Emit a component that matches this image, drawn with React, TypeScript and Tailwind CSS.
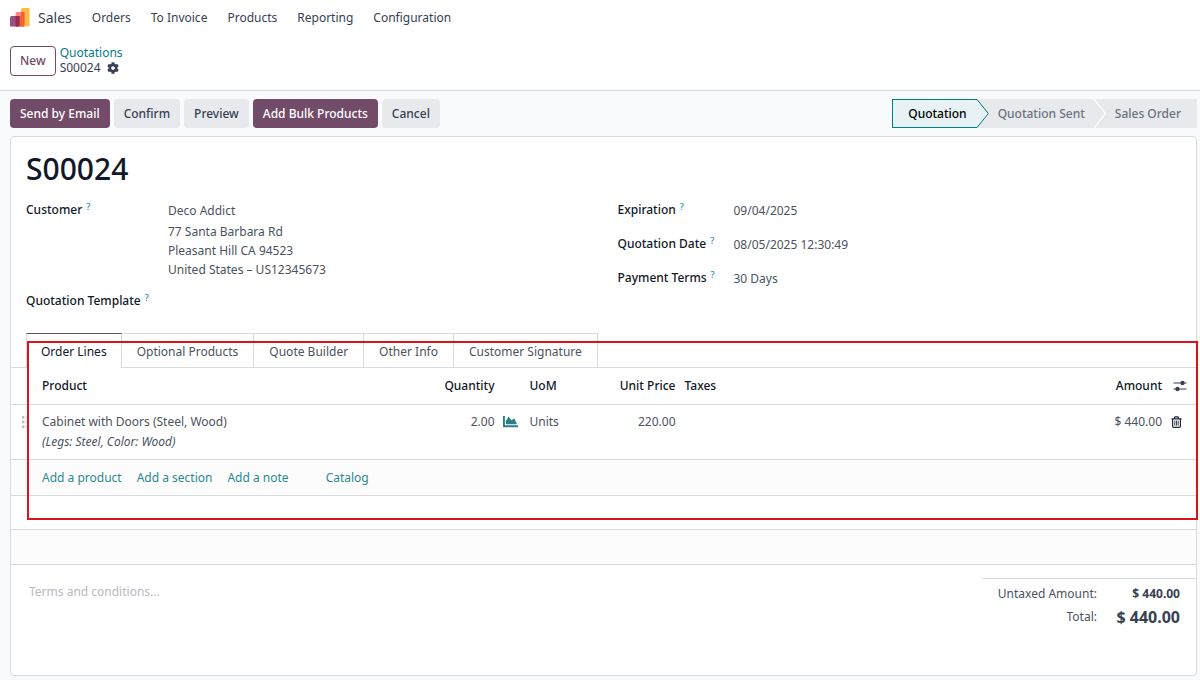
import { FaCog, FaChartArea } from 'react-icons/fa';

const menus = ['Orders', 'To Invoice', 'Products', 'Reporting', 'Configuration'];

const actions = [
  { label: 'Send by Email', primary: true },
  { label: 'Confirm', primary: false },
  { label: 'Preview', primary: false },
  { label: 'Add Bulk Products', primary: true },
  { label: 'Cancel', primary: false },
];

const tabs = ['Order Lines', 'Optional Products', 'Quote Builder', 'Other Info', 'Customer Signature'];

const orderInfo = [
  { label: 'Expiration', value: '09/04/2025' },
  { label: 'Quotation Date', value: '08/05/2025 12:30:49' },
  { label: 'Payment Terms', value: '30 Days' },
];

function SalesLogo() {
  return (
    <svg viewBox="0 0 20 20" className="h-5 w-5" aria-hidden="true">
      <path d="M11 2.500A1.500 1.500 0 0 1 12.500 1H19.500v17a1.500 1.500 0 0 1-1.500 1.500H11z" fill="#fbb945" />
      <path d="M5.500 6.500A1.500 1.500 0 0 1 7 5H14.500v13a1.500 1.500 0 0 1-1.500 1.500H5.500z" fill="#fc868b" />
      <path d="M11 5h3.500v13a1.500 1.500 0 0 1-1.500 1.500h-2z" fill="#f86126" />
      <path d="M9 9h2v10.500H9z" fill="#f4603f" />
      <path d="M0 10.500A1.500 1.500 0 0 1 1.500 9H9.500v9A1.500 1.500 0 0 1 8 19.500H0z" fill="#985184" />
      <path d="M5.500 9h4v9A1.500 1.500 0 0 1 8 19.500H5.500z" fill="#952b4d" />
    </svg>
  );
}

function SlidersIcon() {
  return (
    <svg viewBox="0 0 14 12" className="h-3 w-[14px]" aria-hidden="true">
      <path d="M0.500 3h13M0.500 9h13" stroke="#374151" strokeWidth="1" />
      <circle cx="9.500" cy="3" r="2.200" fill="#374151" />
      <circle cx="4.500" cy="9" r="2.200" fill="#374151" />
    </svg>
  );
}

function TrashIcon() {
  return (
    <svg viewBox="0 0 11 12" className="h-3 w-[11px]" fill="none" stroke="#1f2937" aria-hidden="true">
      <path d="M0.500 2.800h10M3.300 2.800L4 0.800h3l0.700 2M1.600 2.800v7.400a1.100 1.100 0 0 0 1.100 1.100h5.600a1.100 1.100 0 0 0 1.100-1.100V2.800" strokeWidth="1.200" />
      <path d="M3.800 4.600v5M5.500 4.600v5M7.200 4.600v5" strokeWidth="0.900" />
    </svg>
  );
}

function DragHandle() {
  return (
    <svg viewBox="0 0 7 12" className="h-3 w-[7px]" fill="#b9bcc2" aria-hidden="true">
      <path d="M0 0h2.500v2.500H0zM4.500 0H7v2.500H4.500zM0 4.700h2.500v2.500H0zM4.500 4.700H7v2.500H4.500zM0 9.400h2.500v2.500H0zM4.500 9.400H7v2.500H4.500z" />
    </svg>
  );
}

function Help() {
  return <sup className="ml-1 text-[9px] font-medium text-[#1f8ca6]">?</sup>;
}

export default function App() {
  return (
    <div className="min-h-screen bg-[#f9fafb] pb-1 font-['Noto_Sans',sans-serif] text-[12px] leading-[19px] text-[#4b5260]">
      <header className="border-b border-[#d8dadd] bg-white">
        <nav className="flex h-[34px] items-center px-[10px] text-[#374151]">
          <SalesLogo />
          <a href="#sales" className="mr-5 ml-2 text-[14px]">Sales</a>
          <div className="flex gap-5">
            {menus.map((menu) => (
              <a key={menu} href="#menu">{menu}</a>
            ))}
          </div>
        </nav>
        <div className="flex h-[56px] items-start gap-1 px-[10px] pt-3">
          <button className="h-[30px] rounded-[4px] border border-[#714b67] px-[9px] pb-px font-medium text-[#714b67]">New</button>
          <div className="-mt-px leading-[15px]">
            <a href="#quotations" className="block text-[#017e84]">Quotations</a>
            <div className="flex items-center gap-[6px] text-[#374151]">
              <span>S00024</span>
              <button aria-label="Actions"><FaCog className="h-3 w-3" /></button>
            </div>
          </div>
        </div>
      </header>

      <main className="pr-[3px] pl-[10px]">
        <div className="flex items-center justify-between py-2">
          <div className="flex gap-1">
            {actions.map((action) => (
              <button
                key={action.label}
                className={`h-[29px] rounded-[4px] px-[10px] font-medium ${
                  action.primary ? 'bg-[#714b67] text-white' : 'bg-[#e7e9ed] text-[#374151]'
                }`}
              >
                {action.label}
              </button>
            ))}
          </div>
          <div className="flex h-[29px] bg-[#e7e9ed] font-medium text-[#6b7280]">
            <button className="flex text-black">
              <span className="flex h-[29px] items-center border-y border-l border-[#017e84] bg-[#e6f2f3] pr-[10px] pl-[15px]">Quotation</span>
              <svg viewBox="0 0 12 29" className="h-[29px] w-3" aria-hidden="true">
                <path d="M0 0.500L11.400 14.500L0 28.500" fill="#e6f2f3" stroke="#017e84" />
              </svg>
            </button>
            <button className="flex items-center pl-[9px]">
              Quotation Sent
              <svg viewBox="0 0 12 29" className="ml-[9px] h-[29px] w-3" aria-hidden="true">
                <path d="M0 0L11.400 14.500L0 29" fill="none" stroke="#fff" strokeWidth="1.200" />
              </svg>
            </button>
            <button className="pr-4 pl-[9px]">Sales Order</button>
          </div>
        </div>

        <section className="rounded-[4px] border border-[#d8dadd] bg-white">
          <h1 className="px-[15px] pt-[13px] pb-px text-[30px] leading-[38px] font-medium text-[#111827]">S00024</h1>

          <div className="grid grid-cols-2 px-[15px] pt-[11px] pb-[23px]">
            <dl className="grid grid-cols-[142px_1fr] content-start">
              <dt className="font-medium text-[#111827]">Customer<Help /></dt>
              <dd className="pt-px pb-[12px]">
                <div className="mb-[2px]">Deco Addict</div>
                <div>77 Santa Barbara Rd</div>
                <div>Pleasant Hill CA 94523</div>
                <div>United States – US12345673</div>
              </dd>
              <dt className="font-medium text-[#111827]">Quotation Template<Help /></dt>
              <dd />
            </dl>
            <dl className="grid grid-cols-[116px_1fr] content-start gap-y-[14px] pl-[14px]">
              {orderInfo.map((field) => (
                <div key={field.label} className="contents">
                  <dt className="font-medium text-[#111827]">{field.label}<Help /></dt>
                  <dd className="pt-px">{field.value}</dd>
                </div>
              ))}
            </dl>
          </div>

          <div className="relative">
            <div role="tablist" className="flex border-b border-[#d8dadd] pl-[15px]">
              {tabs.map((tab, i) => (
                <button
                  key={tab}
                  role="tab"
                  aria-selected={i === 0}
                  className={`border-t border-r border-r-[#d8dadd] ${
                    i === 0
                      ? '-mb-px h-[35px] border-l border-t-[#714b67] border-l-[#d8dadd] bg-white px-[14px] text-[#111827]'
                      : 'h-[34px] border-t-[#d8dadd] px-[15px] pt-px'
                  }`}
                >
                  {tab}
                </button>
              ))}
            </div>

            <table className="w-full table-fixed text-left">
              <colgroup>
                <col className="w-[31px]" />
                <col className="w-[30%]" />
                <col className="w-[97px]" />
                <col className="w-[35px]" />
                <col className="w-[71px]" />
                <col className="w-[75px]" />
                <col />
                <col className="w-[80px]" />
                <col className="w-[34px]" />
              </colgroup>
              <thead>
                <tr className="h-9 border-b border-[#d8dadd] text-[#111827] *:font-medium">
                  <th />
                  <th>Product</th>
                  <th className="text-right">Quantity</th>
                  <th />
                  <th>UoM</th>
                  <th className="text-right">Unit Price</th>
                  <th className="pl-[9px]">Taxes</th>
                  <th className="text-right">Amount</th>
                  <th className="pl-[11px]">
                    <button aria-label="Optional columns" className="block"><SlidersIcon /></button>
                  </th>
                </tr>
              </thead>
              <tbody>
                <tr className="h-[55px] border-b border-[#d8dadd] align-top *:pt-[7px]">
                  <td className="pl-[11px]"><div className="flex h-5 items-center"><DragHandle /></div></td>
                  <td className="leading-5">
                    <div>Cabinet with Doors (Steel, Wood)</div>
                    <div className="italic">(Legs: Steel, Color: Wood)</div>
                  </td>
                  <td className="text-right">2.00</td>
                  <td className="pl-2">
                    <button aria-label="Forecast" className="flex h-5 items-center"><FaChartArea className="h-[15px] w-[15px] text-[#2b7f85]" /></button>
                  </td>
                  <td>Units</td>
                  <td className="text-right">220.00</td>
                  <td />
                  <td className="text-right">$ 440.00</td>
                  <td className="pl-[9px]">
                    <button aria-label="Delete row" className="flex h-5 items-center"><TrashIcon /></button>
                  </td>
                </tr>
                <tr className="h-9 border-b border-[#d8dadd] bg-[#fcfcfd]">
                  <td />
                  <td colSpan={8}>
                    <div className="flex gap-[15px] text-[#2b8a8e]">
                      <a href="#product">Add a product</a>
                      <a href="#section">Add a section</a>
                      <a href="#note">Add a note</a>
                      <a href="#catalog" className="ml-[22px]">Catalog</a>
                    </div>
                  </td>
                </tr>
                <tr className="h-[34px] border-b border-[#d8dadd]"><td colSpan={9} /></tr>
                <tr className="h-[35px] border-b border-[#d8dadd] bg-[#fcfcfd]"><td colSpan={9} /></tr>
              </tbody>
            </table>

            {/* highlight around the order lines */}
            <div className="pointer-events-none absolute top-2 -right-[2px] bottom-[45px] left-4 border-2 border-[#d9141a]" />
          </div>

          <div className="flex items-start justify-between pt-[13px] pb-[46px]">
            <textarea
              aria-label="Terms and conditions"
              placeholder="Terms and conditions..."
              rows={1}
              className="mt-[4px] ml-[18px] w-1/2 resize-none outline-none placeholder:text-[#b8babd]"
            />
            <dl className="grid grid-cols-[115px_83px] border-t border-[#d8dadd] pt-1 pr-4 text-right">
              <dt className="leading-[22px]">Untaxed Amount:</dt>
              <dd className="leading-[22px] font-bold text-[#374151]">$ 440.00</dd>
              <dt className="leading-6">Total:</dt>
              <dd className="text-[16px] leading-6 font-bold text-[#374151]">$ 440.00</dd>
            </dl>
          </div>
        </section>
      </main>
    </div>
  );
}
